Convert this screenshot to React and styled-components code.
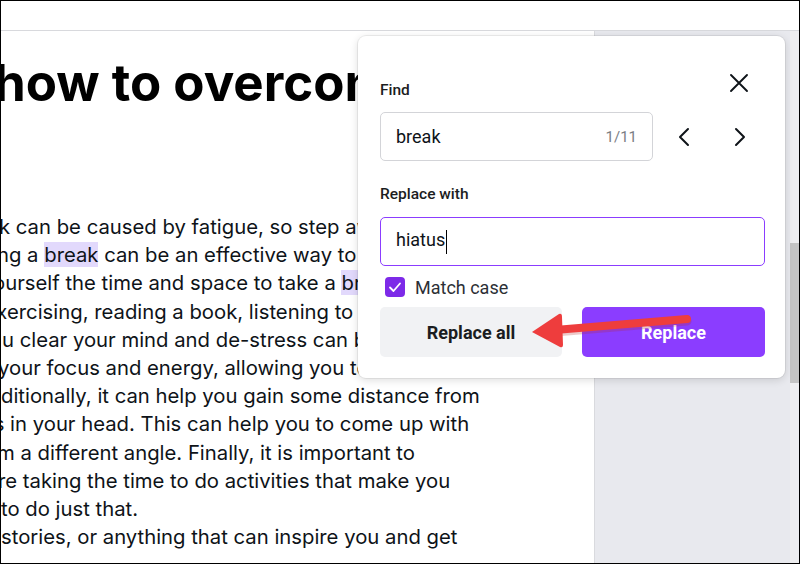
import React from 'react';
import styled, { createGlobalStyle } from 'styled-components';

const GlobalStyle = createGlobalStyle`
  body {
    margin: 0;
    font-family: Roboto, "Liberation Sans", sans-serif;
  }
`;

const Frame = styled.div`
  position: relative;
  width: 800px;
  height: 564px;
  box-sizing: border-box;
  border: 1px solid #000;
  overflow: hidden;
  display: flex;
  flex-direction: column;
  background: #fff;
`;

const TopBar = styled.div`
  height: 29px;
  flex-shrink: 0;
  background: #fff;
  border-bottom: 1px solid #d8d9dd;
`;

const Workspace = styled.div`
  flex: 1;
  display: flex;
  background: #e8e9ee;
  min-height: 0;
`;

const Page = styled.div`
  width: 594px;
  flex-shrink: 0;
  background: #fff;
  border-right: 1px solid #d9dade;
  overflow: hidden;
  padding-top: 22px;
  box-sizing: border-box;
`;

const Heading = styled.h1`
  margin: 0 0 0 -7px;
  font-family: Inter, Roboto, sans-serif;
  font-weight: 700;
  font-size: 51px;
  line-height: 60px;
  color: #000;
  white-space: nowrap;
`;

const Body = styled.div`
  margin-top: 100px;
  font-family: Inter, Roboto, sans-serif;
  font-size: 20.3px;
  line-height: 28.2px;
  color: #0e1318;
`;

const Line = styled.div`
  white-space: nowrap;
  margin-left: ${p => p.$shift}px;
`;

const Mark = styled.span`
  background: #e2d9fc;
`;

const Stage = styled.div`
  flex: 1;
`;

const Scrollbar = styled.div`
  width: 9px;
  flex-shrink: 0;
  background: #eeeef0;
  padding-top: 212px;
  box-sizing: border-box;
`;

const Thumb = styled.div`
  height: 140px;
  background: #c4c4c4;
`;

const Popup = styled.div`
  position: absolute;
  left: 357px;
  top: 35px;
  width: 427px;
  height: 342px;
  box-sizing: border-box;
  padding: 28px 20px 0 22px;
  background: #fff;
  border-radius: 8px;
  box-shadow: 0 0 0 1px rgba(0, 0, 0, 0.06), 0 2px 8px rgba(0, 0, 0, 0.14);
  display: flex;
  flex-direction: column;
`;

const HeaderRow = styled.div`
  display: flex;
  justify-content: space-between;
  align-items: flex-start;
  height: 40px;
`;

const Label = styled.div`
  font-size: 15.5px;
  font-weight: 500;
  line-height: 20px;
  color: #1b1d21;
  padding-top: ${p => p.$top || 0}px;
`;

const IconButton = styled.button`
  width: 40px;
  height: 36px;
  display: flex;
  align-items: center;
  justify-content: center;
  padding: 0;
  border: none;
  background: transparent;
  color: #0e1318;
`;

const CloseButton = styled(IconButton)`
  margin-top: 1px;
  margin-right: 6px;
`;

const FindRow = styled.div`
  display: flex;
  align-items: center;
  margin-top: 8px;
  height: 49px;
`;

const Field = styled.div`
  box-sizing: border-box;
  width: ${p => p.$width}px;
  height: 49px;
  display: flex;
  align-items: center;
  padding: 0 15px;
  border: 1px solid ${p => (p.$active ? '#8b3dff' : '#d3d4d8')};
  border-radius: 5px;
  font-size: 18px;
  color: #0e1318;
`;

const FieldText = styled.span`
  flex: 1;
`;

const Caret = styled.span`
  display: inline-block;
  width: 1.5px;
  height: 24px;
  background: #000;
  vertical-align: middle;
  margin-left: 0.5px;
`;

const Count = styled.span`
  font-size: 15px;
  color: #7b7e85;
`;

const NavGroup = styled.div`
  display: flex;
  gap: 16px;
  margin-left: 11px;
`;

const ReplaceLabel = styled(Label)`
  margin-top: 23px;
`;

const ReplaceField = styled(Field)`
  margin-top: 13px;
`;

const CheckRow = styled.label`
  display: flex;
  align-items: center;
  gap: 10px;
  height: 30px;
  margin-top: 6px;
  padding-left: 5px;
  font-size: 18px;
  color: #2c2f35;
`;

const Box = styled.span`
  width: 20px;
  height: 20px;
  border-radius: 4px;
  background: #7d2ae8;
  display: flex;
  align-items: center;
  justify-content: center;
`;

const Buttons = styled.div`
  display: grid;
  grid-template-columns: 182px 183px;
  gap: 20px;
  margin-top: 5px;
`;

const Action = styled.button`
  height: 50px;
  border: none;
  border-radius: 5px;
  font-family: Roboto, sans-serif;
  font-size: 18px;
  font-weight: 700;
  background: ${p => (p.$primary ? '#8b3dff' : '#f1f2f4')};
  color: ${p => (p.$primary ? '#fff' : '#1b1d21')};
`;

const ArrowLayer = styled.svg`
  position: absolute;
  left: 520px;
  top: 300px;
  overflow: visible;
`;

const lines = [
  { shift: -2, text: ['k can be caused by fatigue, so step away from your'] },
  { shift: -4, text: ['ng a ', 'break', ' can be an effective way to clear'] },
  { shift: -19, text: ['yourself the time and space to take a ', 'break', ', and'] },
  { shift: -16, text: ['exercising, reading a book, listening to music'] },
  { shift: 1, text: ['u clear your mind and de-stress can be'] },
  { shift: -3, text: ['your focus and energy, allowing you to return'] },
  { shift: 0, text: ['ditionally, it can help you gain some distance from'] },
  { shift: -18, text: ['ss in your head. This can help you to come up with'] },
  { shift: -4, text: ['m a different angle. Finally, it is important to'] },
  { shift: -3, text: ['re taking the time to do activities that make you'] },
  { shift: 0, text: ['to do just that.'] },
  { shift: 0, text: ['stories, or anything that can inspire you and get'] },
];

const CloseIcon = () => (
  <svg width="20" height="20" viewBox="0 0 20 20" fill="none" stroke="currentColor" strokeWidth="1.9" strokeLinecap="round">
    <path d="M2 2 L18 18 M18 2 L2 18" />
  </svg>
);

const Chevron = ({ dir }) => (
  <svg width="12" height="20" viewBox="0 0 12 20" fill="none" stroke="currentColor" strokeWidth="2" strokeLinecap="round" strokeLinejoin="round">
    <path d={dir === 'left' ? 'M10 2 L2 10 L10 18' : 'M2 2 L10 10 L2 18'} />
  </svg>
);

const Check = () => (
  <svg width="14" height="14" viewBox="0 0 14 14" fill="none" stroke="#fff" strokeWidth="1.8" strokeLinecap="round" strokeLinejoin="round">
    <path d="M2 7.5 L5.5 11 L12 3.5" />
  </svg>
);

export default function App() {
  return (
    <Frame>
      <GlobalStyle />
      <TopBar />
      <Workspace>
        <Page>
          <Heading>how to overcome writer's block</Heading>
          <Body>
            {lines.map((line, i) => (
              <Line key={i} $shift={line.shift}>
                {line.text.map((part, j) =>
                  part === 'break' ? <Mark key={j}>{part}</Mark> : <React.Fragment key={j}>{part}</React.Fragment>
                )}
              </Line>
            ))}
          </Body>
        </Page>
        <Stage />
        <Scrollbar>
          <Thumb />
        </Scrollbar>
      </Workspace>

      <Popup>
        <HeaderRow>
          <Label $top={16}>Find</Label>
          <CloseButton><CloseIcon /></CloseButton>
        </HeaderRow>
        <FindRow>
          <Field $width={273}>
            <FieldText>break</FieldText>
            <Count>1/11</Count>
          </Field>
          <NavGroup>
            <IconButton><Chevron dir="left" /></IconButton>
            <IconButton><Chevron dir="right" /></IconButton>
          </NavGroup>
        </FindRow>
        <ReplaceLabel>Replace with</ReplaceLabel>
        <ReplaceField $width={385} $active>
          <FieldText>hiatus<Caret /></FieldText>
        </ReplaceField>
        <CheckRow>
          <Box><Check /></Box>
          Match case
        </CheckRow>
        <Buttons>
          <Action>Replace all</Action>
          <Action $primary>Replace</Action>
        </Buttons>
      </Popup>

      <ArrowLayer width="180" height="50" viewBox="0 0 180 50">
        <line x1="166" y1="18" x2="34" y2="29" stroke="#b42a2a" strokeOpacity="0.25" strokeWidth="9" strokeLinecap="round" transform="translate(0 2)" />
        <line x1="166" y1="18" x2="34" y2="29" stroke="#ee3d3d" strokeWidth="8" strokeLinecap="round" />
        <path d="M11 31 L38 13 Q41 12 41 16 L42 44 Q42 47 39 46 Z" fill="#ee3d3d" strokeLinejoin="round" />
      </ArrowLayer>
    </Frame>
  );
}
